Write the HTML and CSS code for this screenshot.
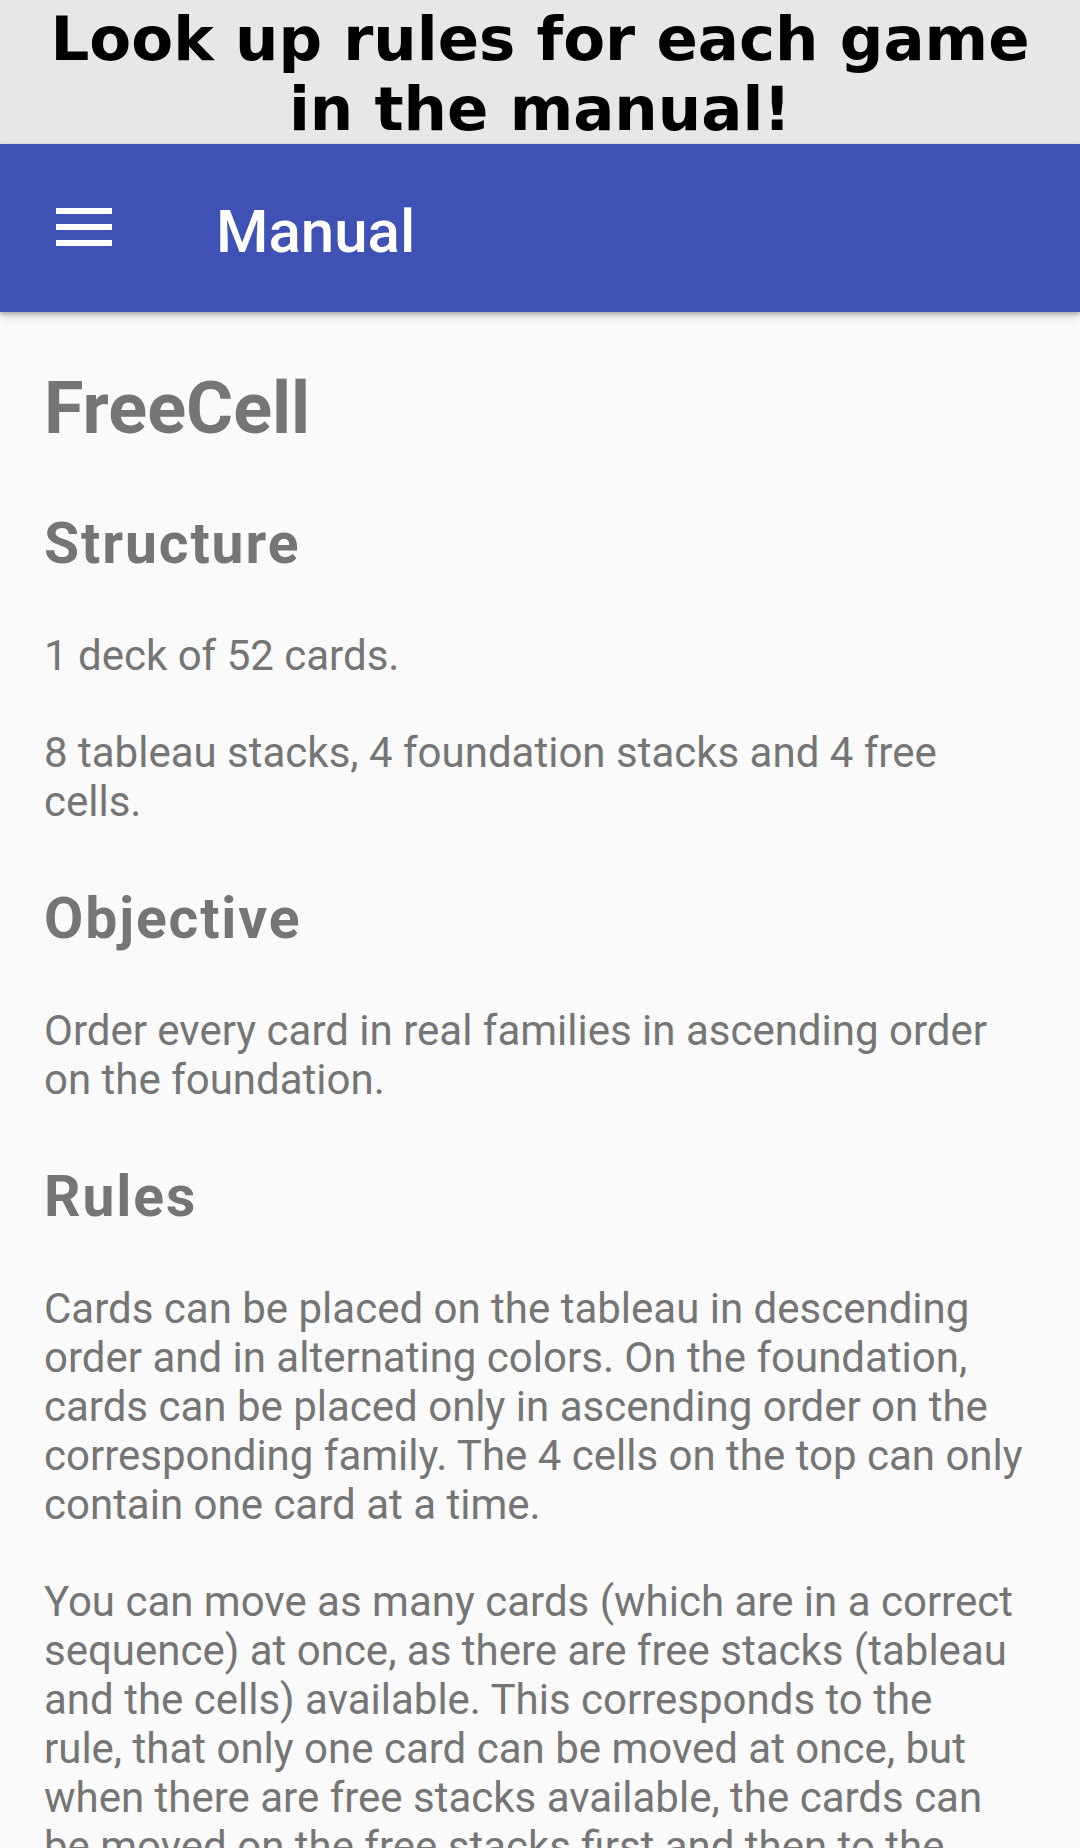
FILE: index.html
```html
<!DOCTYPE html>
<html lang="en">
<head>
<meta charset="utf-8">
<title>Manual</title>
<link rel="stylesheet" href="styles.css">
</head>
<body>
<div class="banner">Look up rules for each game in the manual!</div>
<header class="toolbar">
  <svg class="menu-icon" width="56" height="40" viewBox="0 0 56 40" aria-hidden="true">
    <rect x="0" y="0" width="56" height="6" fill="#fff"/>
    <rect x="0" y="16" width="56" height="6" fill="#fff"/>
    <rect x="0" y="32" width="56" height="6" fill="#fff"/>
  </svg>
  <div class="toolbar-title">Manual</div>
</header>
<main class="content">
  <h1 class="game-title">FreeCell</h1>
  <h2 class="section-title">Structure</h2>
  <p class="text">1 deck of 52 cards.</p>
  <p class="text">8 tableau stacks, 4 foundation stacks and 4 free cells.</p>
  <h2 class="section-title">Objective</h2>
  <p class="text">Order every card in real families in ascending order on the foundation.</p>
  <h2 class="section-title">Rules</h2>
  <p class="text">Cards can be placed on the tableau in descending order and in alternating colors. On the foundation, cards can be placed only in ascending order on the corresponding family. The 4 cells on the top can only contain one card at a time.</p>
  <p class="text">You can move as many cards (which are in a correct sequence) at once, as there are free stacks (tableau and the cells) available. This corresponds to the rule,&nbsp;that only one card can be moved at once, but when there are free stacks available, the cards can be moved on the free stacks first and then to the destination.</p>
</main>
</body>
</html>
```
FILE: styles.css
```css
html, body {
  margin: 0;
  padding: 0;
}
body {
  width: 1080px;
  height: 1848px;
  overflow: hidden;
  background: #fafafa;
  font-family: Roboto, "Noto Sans", sans-serif;
}
.banner {
  box-sizing: border-box;
  height: 144px;
  padding: 4px 30px 0;
  background: #e7e7e7;
  color: #000;
  font-family: "DejaVu Sans", sans-serif;
  font-weight: bold;
  font-size: 61px;
  line-height: 70px;
  text-align: center;
}
.toolbar {
  position: relative;
  z-index: 1;
  height: 168px;
  background: #3f51b5;
  display: flex;
  align-items: center;
  padding-left: 56px;
  box-shadow: 0 2px 4px rgba(0,0,0,0.24), 0 5px 10px rgba(0,0,0,0.14);
}
.menu-icon {
  display: block;
  flex: none;
}
.toolbar-title {
  margin-left: 104px;
  padding-top: 7px;
  color: #fff;
  font-family: Roboto, sans-serif;
  font-weight: 500;
  font-size: 60px;
}
.content {
  padding: 55px 50px 0 44px;
  color: #757575;
}
.game-title {
  margin: 0 0 60px;
  font-size: 72px;
  font-weight: bold;
  line-height: 84px;
}
.section-title {
  margin: 60px 0 54px;
  font-size: 57px;
  font-weight: bold;
  line-height: 66px;
  letter-spacing: 1.9px;
}
.text {
  margin: 0 0 48px;
  font-size: 42px;
  line-height: 49px;
}
```
